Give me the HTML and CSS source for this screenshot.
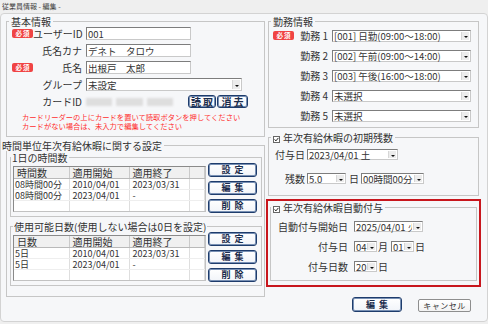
FILE: index.html
```html
<!doctype html>
<html lang="ja">
<head>
  <meta charset="utf-8">
  <title>従業員情報 - 編集 -</title>
  <link rel="stylesheet" href="styles.css">
</head>
<body>
  <div class="title">従業員情報 - 編集 -</div>
  <div class="panel">
    <div class="col-l">
      <fieldset class="basic">
        <legend>基本情報</legend>
        <div class="rows">
          <div class="row"><span class="slot"><b class="req">必須</b></span><span class="lbl">ユーザーID</span><span class="fld w105"><span class="txt">001</span></span></div>
          <div class="row"><span class="slot"></span><span class="lbl">氏名カナ</span><span class="fld w105"><span class="txt">デネト　タロウ</span></span></div>
          <div class="row"><span class="slot"><b class="req">必須</b></span><span class="lbl">氏名</span><span class="fld w105"><span class="txt">出根戸　太郎</span></span></div>
          <div class="row"><span class="slot"></span><span class="lbl">グループ</span><span class="fld sel w156"><span class="txt">未設定</span><span class="dd"></span></span></div>
          <div class="row"><span class="slot"></span><span class="lbl">カードID</span>
            <span class="card"><span></span><span></span><span></span></span>
            <button class="btn sm first">読取</button><button class="btn sm w31">消去</button>
          </div>
        </div>
        <p class="note">カードリーダーの上にカードを置いて読取ボタンを押してください<br>カードがない場合は、未入力で編集してください</p>
      </fieldset>

      <fieldset class="hours">
        <legend>時間単位年次有給休暇に関する設定</legend>
        <fieldset class="sub">
          <legend>1日の時間数</legend>
          <div class="lrow">
            <div class="lst">
              <table>
                <colgroup><col class="c1"><col class="c2"><col class="c2"><col></colgroup>
                <tr><th>時間数</th><th>適用開始</th><th>適用終了</th><th></th></tr>
                <tr><td>08時間00分</td><td>2010/04/01</td><td>2023/03/31</td><td></td></tr>
                <tr><td>08時間00分</td><td>2023/04/01</td><td>-</td><td></td></tr>
                <tr class="fill"><td></td><td></td><td></td><td></td></tr>
              </table>
            </div>
            <div class="btns">
              <button class="btn">設定</button>
              <button class="btn">編集</button>
              <button class="btn">削除</button>
            </div>
          </div>
        </fieldset>
        <fieldset class="sub days">
          <legend>使用可能日数(使用しない場合は0日を設定)</legend>
          <div class="lrow">
            <div class="lst">
              <table>
                <colgroup><col class="c1"><col class="c2"><col class="c2"><col></colgroup>
                <tr><th>日数</th><th>適用開始</th><th>適用終了</th><th></th></tr>
                <tr><td>5日</td><td>2010/04/01</td><td>2023/03/31</td><td></td></tr>
                <tr><td>5日</td><td>2023/04/01</td><td>-</td><td></td></tr>
                <tr class="fill"><td></td><td></td><td></td><td></td></tr>
              </table>
            </div>
            <div class="btns">
              <button class="btn">設定</button>
              <button class="btn">編集</button>
              <button class="btn">削除</button>
            </div>
          </div>
        </fieldset>
      </fieldset>
    </div>

    <div class="col-r">
      <fieldset class="kinmu">
        <legend>勤務情報</legend>
        <div class="rows">
          <div class="row"><span class="slot"><b class="req">必須</b></span><span class="lbl">勤務 1</span><span class="fld sel w139"><span class="txt">[001] 日勤(09:00～18:00)</span><span class="dd"></span></span></div>
          <div class="row"><span class="slot"></span><span class="lbl">勤務 2</span><span class="fld sel w139"><span class="txt">[002] 午前(09:00～14:00)</span><span class="dd"></span></span></div>
          <div class="row"><span class="slot"></span><span class="lbl">勤務 3</span><span class="fld sel w139"><span class="txt">[003] 午後(16:00～18:00)</span><span class="dd"></span></span></div>
          <div class="row"><span class="slot"></span><span class="lbl">勤務 4</span><span class="fld sel w139"><span class="txt">未選択</span><span class="dd"></span></span></div>
          <div class="row"><span class="slot"></span><span class="lbl">勤務 5</span><span class="fld sel w139"><span class="txt">未選択</span><span class="dd"></span></span></div>
        </div>
      </fieldset>

      <fieldset class="init">
        <legend><svg class="chk" width="7" height="7" viewBox="0 0 7 7"><rect x=".5" y=".5" width="6" height="6" fill="#fff" stroke="#666"/><path d="M1.6 3.4l1.3 1.5 2.5-3" fill="none" stroke="#222" stroke-width="1"/></svg>年次有給休暇の初期残数</legend>
        <div class="rows">
          <div class="row"><span class="lbl">付与日</span><span class="fld sel w91"><span class="txt">2023/04/01 土</span><span class="dd"></span></span></div>
          <div class="row"><span class="lbl">残数</span><span class="fld sel w39"><span class="txt">5.0</span><span class="dd"></span></span><span class="unit">日</span><span class="fld sel w63"><span class="txt">00時間00分</span><span class="dd"></span></span></div>
        </div>
      </fieldset>

      <div class="auto">
        <fieldset>
          <legend><svg class="chk" width="7" height="7" viewBox="0 0 7 7"><rect x=".5" y=".5" width="6" height="6" fill="#fff" stroke="#666"/><path d="M1.6 3.4l1.3 1.5 2.5-3" fill="none" stroke="#222" stroke-width="1"/></svg>年次有給休暇自動付与</legend>
          <div class="rows">
            <div class="row"><span class="lbl">自動付与開始日</span><span class="fld sel w69"><span class="txt cut">2025/04/01 火</span><span class="dd"></span></span></div>
            <div class="row"><span class="lbl">付与日</span><span class="fld sel w23"><span class="txt">04</span><span class="dd"></span></span><span class="unit u2">月</span><span class="fld sel w23"><span class="txt">01</span><span class="dd"></span></span><span class="unit u2">日</span></div>
            <div class="row"><span class="lbl">付与日数</span><span class="fld sel w23"><span class="txt">20</span><span class="dd"></span></span><span class="unit u2">日</span></div>
          </div>
        </fieldset>
      </div>

      <div class="foot">
        <button class="btn save">編集</button>
        <button class="cancel">キャンセル</button>
      </div>
    </div>
  </div>
</body>
</html>
```

FILE: styles.css
```css
html, body {
	margin: 0;
	padding: 0;
	background: #efefef;
	color: #333;
	font-family: "Noto Sans CJK JP", "Noto Sans", sans-serif;
	font-size: 10px;
}
button { cursor: pointer; font-family: inherit; padding: 0; }
button:focus { outline: none; }

.title {
	height: 13px;
	padding: 1px 0 0 2px;
	box-sizing: border-box;
	font-size: 7px;
	line-height: 11px;
	color: #444;
}
.panel {
	display: flex;
	gap: 3px;
	height: 309px;
	box-sizing: border-box;
	padding: 2px 7px 9px 5px;
	background: #f6f7f9;
	border: 1px solid #d3d3d3;
	border-radius: 4px;
}
.col-l { width: 259px; flex: none; }
.col-r { width: 211px; flex: none; display: flex; flex-direction: column; }

fieldset {
	margin: 0;
	padding: 0;
	min-width: 0;
	border: 1px solid #c6c6c6;
}
legend {
	margin-left: 2px;
	padding: 0 2px;
	font-size: 10px;
	line-height: 11px;
	white-space: nowrap;
}
.chk { vertical-align: -1px; margin-right: 3px; }

.rows { display: flex; flex-direction: column; }
.row { display: flex; align-items: center; }
.slot { width: 21px; flex: none; }
.req {
	display: block;
	width: 21px;
	height: 9px;
	border-radius: 2px;
	background: #f04444;
	color: #fff;
	font-size: 6.5px;
	line-height: 9px;
	text-align: center;
	letter-spacing: 1px;
	text-indent: 1px;
}
.lbl { flex: none; text-align: right; white-space: nowrap; }

.fld {
	display: flex;
	align-items: center;
	box-sizing: border-box;
	flex: none;
	height: 12px;
	padding-left: 1px;
	border: 1px solid;
	border-color: #7d7d7d #c9c9c9 #c9c9c9 #7d7d7d;
	background: #fff;
	font-size: 9.5px;
	white-space: nowrap;
}
.fld .txt { flex: 1; min-width: 0; line-height: 10px; }
.fld .txt.cut { overflow-x: clip; }
.dd {
	display: flex;
	align-items: center;
	justify-content: center;
	align-self: stretch;
	flex: none;
	width: 7px;
	margin: 1px;
	background: #ececec;
	border-left: 1px solid #d6d6d6;
}
.dd::after {
	content: "";
	margin-top: 2px;
	border-left: 2px solid transparent;
	border-right: 2px solid transparent;
	border-top: 2px solid #111;
}
.w105 { width: 105px; }
.w156 { width: 156px; }
.w139 { width: 139px; }
.w91 { width: 91px; }
.w69 { width: 69px; }
.w63 { width: 63px; }
.w39 { width: 39px; }
.w23 { width: 23px; }
.unit { width: 10px; margin: 0 2px 0 3px; }
.unit.u2 { width: 11px; margin: 0 2px 0 1px; }

.btn {
	box-sizing: border-box;
	width: 49px;
	height: 14px;
	border: 1px solid #1e3c6c;
	border-radius: 3px;
	box-shadow: inset 0 0 0 1px #7890b4;
	background: linear-gradient(#fff, #f1f4f9);
	color: #1b2c4c;
	font-size: 9px;
	font-weight: bold;
	line-height: 10px;
	letter-spacing: 4px;
	text-indent: 4px;
}

/* 基本情報 */
.basic .rows { gap: 4px; padding-left: 5px; }
.basic .row { height: 13px; }
.basic .lbl { width: 49px; margin-right: 4px; }
.basic .fld { height: 13px; }
.card { display: flex; gap: 4px; width: 87px; flex: none; }
.card span { flex: 1; height: 8px; background: #dedede; filter: blur(1px); }
.btn.sm { width: 28px; height: 13px; font-size: 10px; letter-spacing: 2px; text-indent: 2px; }
.btn.sm.first { margin-left: 15px; margin-right: 1px; }
.btn.sm.w31 { width: 31px; }
.note {
	margin: 5px 0 0;
	padding: 0 0 5px 15px;
	color: #ff2e2e;
	font-size: 7.3px;
	line-height: 9px;
	white-space: nowrap;
}

/* 時間単位 */
.hours { margin-top: 3px; padding-bottom: 10px; }
.hours > legend { margin-left: -7px; }
.sub { margin: 1px 2px 0 3px; padding-bottom: 3px; }
.sub > legend { margin-left: 0; padding: 0 1px; }
.sub.days { margin-top: 4px; }
.sub.days > legend { margin-left: 2px; }
.lrow { display: flex; align-items: flex-start; }
.lst {
	box-sizing: border-box;
	width: 193px;
	height: 46px;
	margin: 3px 0 0 2px;
	border: 1px solid;
	border-color: #8a8a8a #c2c2c2 #c2c2c2 #8a8a8a;
	background: #fff;
	overflow: hidden;
}
.lst table { width: 100%; border-collapse: collapse; table-layout: fixed; }
.lst col.c1 { width: 55px; }
.lst col.c2 { width: 60px; }
.lst th {
	height: 11px;
	padding: 0 3px;
	background: #f0f0f0;
	border-right: 1px solid #cacaca;
	border-bottom: 1px solid #b9b9b9;
	font-size: 10px;
	font-weight: normal;
	line-height: 11px;
	text-align: left;
}
.lst td {
	height: 10px;
	padding: 0 2px 0 3px;
	border-right: 1px solid #dedede;
	border-bottom: 1px solid #eeeeee;
	font-size: 9px;
	line-height: 9px;
	white-space: nowrap;
}
.lst td:first-child { padding-left: 1px; }
.lst tr.fill td { height: 20px; border-bottom: 0; }
.btns { display: flex; flex-direction: column; gap: 4px; margin-left: 2px; }

/* 勤務情報 */
.kinmu .rows { gap: 5px; padding: 1px 0 4px 4px; }
.kinmu .lbl { width: 34px; margin-right: 4px; }

/* 初期残数 */
.init { margin-top: 4px; }
.init .rows { gap: 9px; padding: 4px 0 9px; }
.init .fld { height: 11px; }
.init .lbl { width: 36px; margin-right: 2px; }

/* 自動付与 */
.auto {
	margin: 3px -2px 0;
	padding: 1px 2px 4px;
	border: 2px solid #c8161d;
}
.auto legend { margin-left: 0; }
.auto .rows { gap: 5px; padding: 6px 0 6px; }
.auto .fld { height: 11px; }
.auto .lbl { width: 77px; margin-right: 6px; }

.foot {
	display: flex;
	justify-content: flex-end;
	align-items: flex-end;
	gap: 16px;
	margin-top: auto;
	padding-right: 8px;
}
.btn.save { width: 50px; height: 15px; }
.cancel {
	box-sizing: border-box;
	width: 53px;
	height: 13px;
	border: 1px solid #8e8e8e;
	border-radius: 2px;
	background: linear-gradient(#fff, #f3f3f3);
	color: #333;
	font-size: 8px;
	line-height: 10px;
	letter-spacing: 0.5px;
}
```
